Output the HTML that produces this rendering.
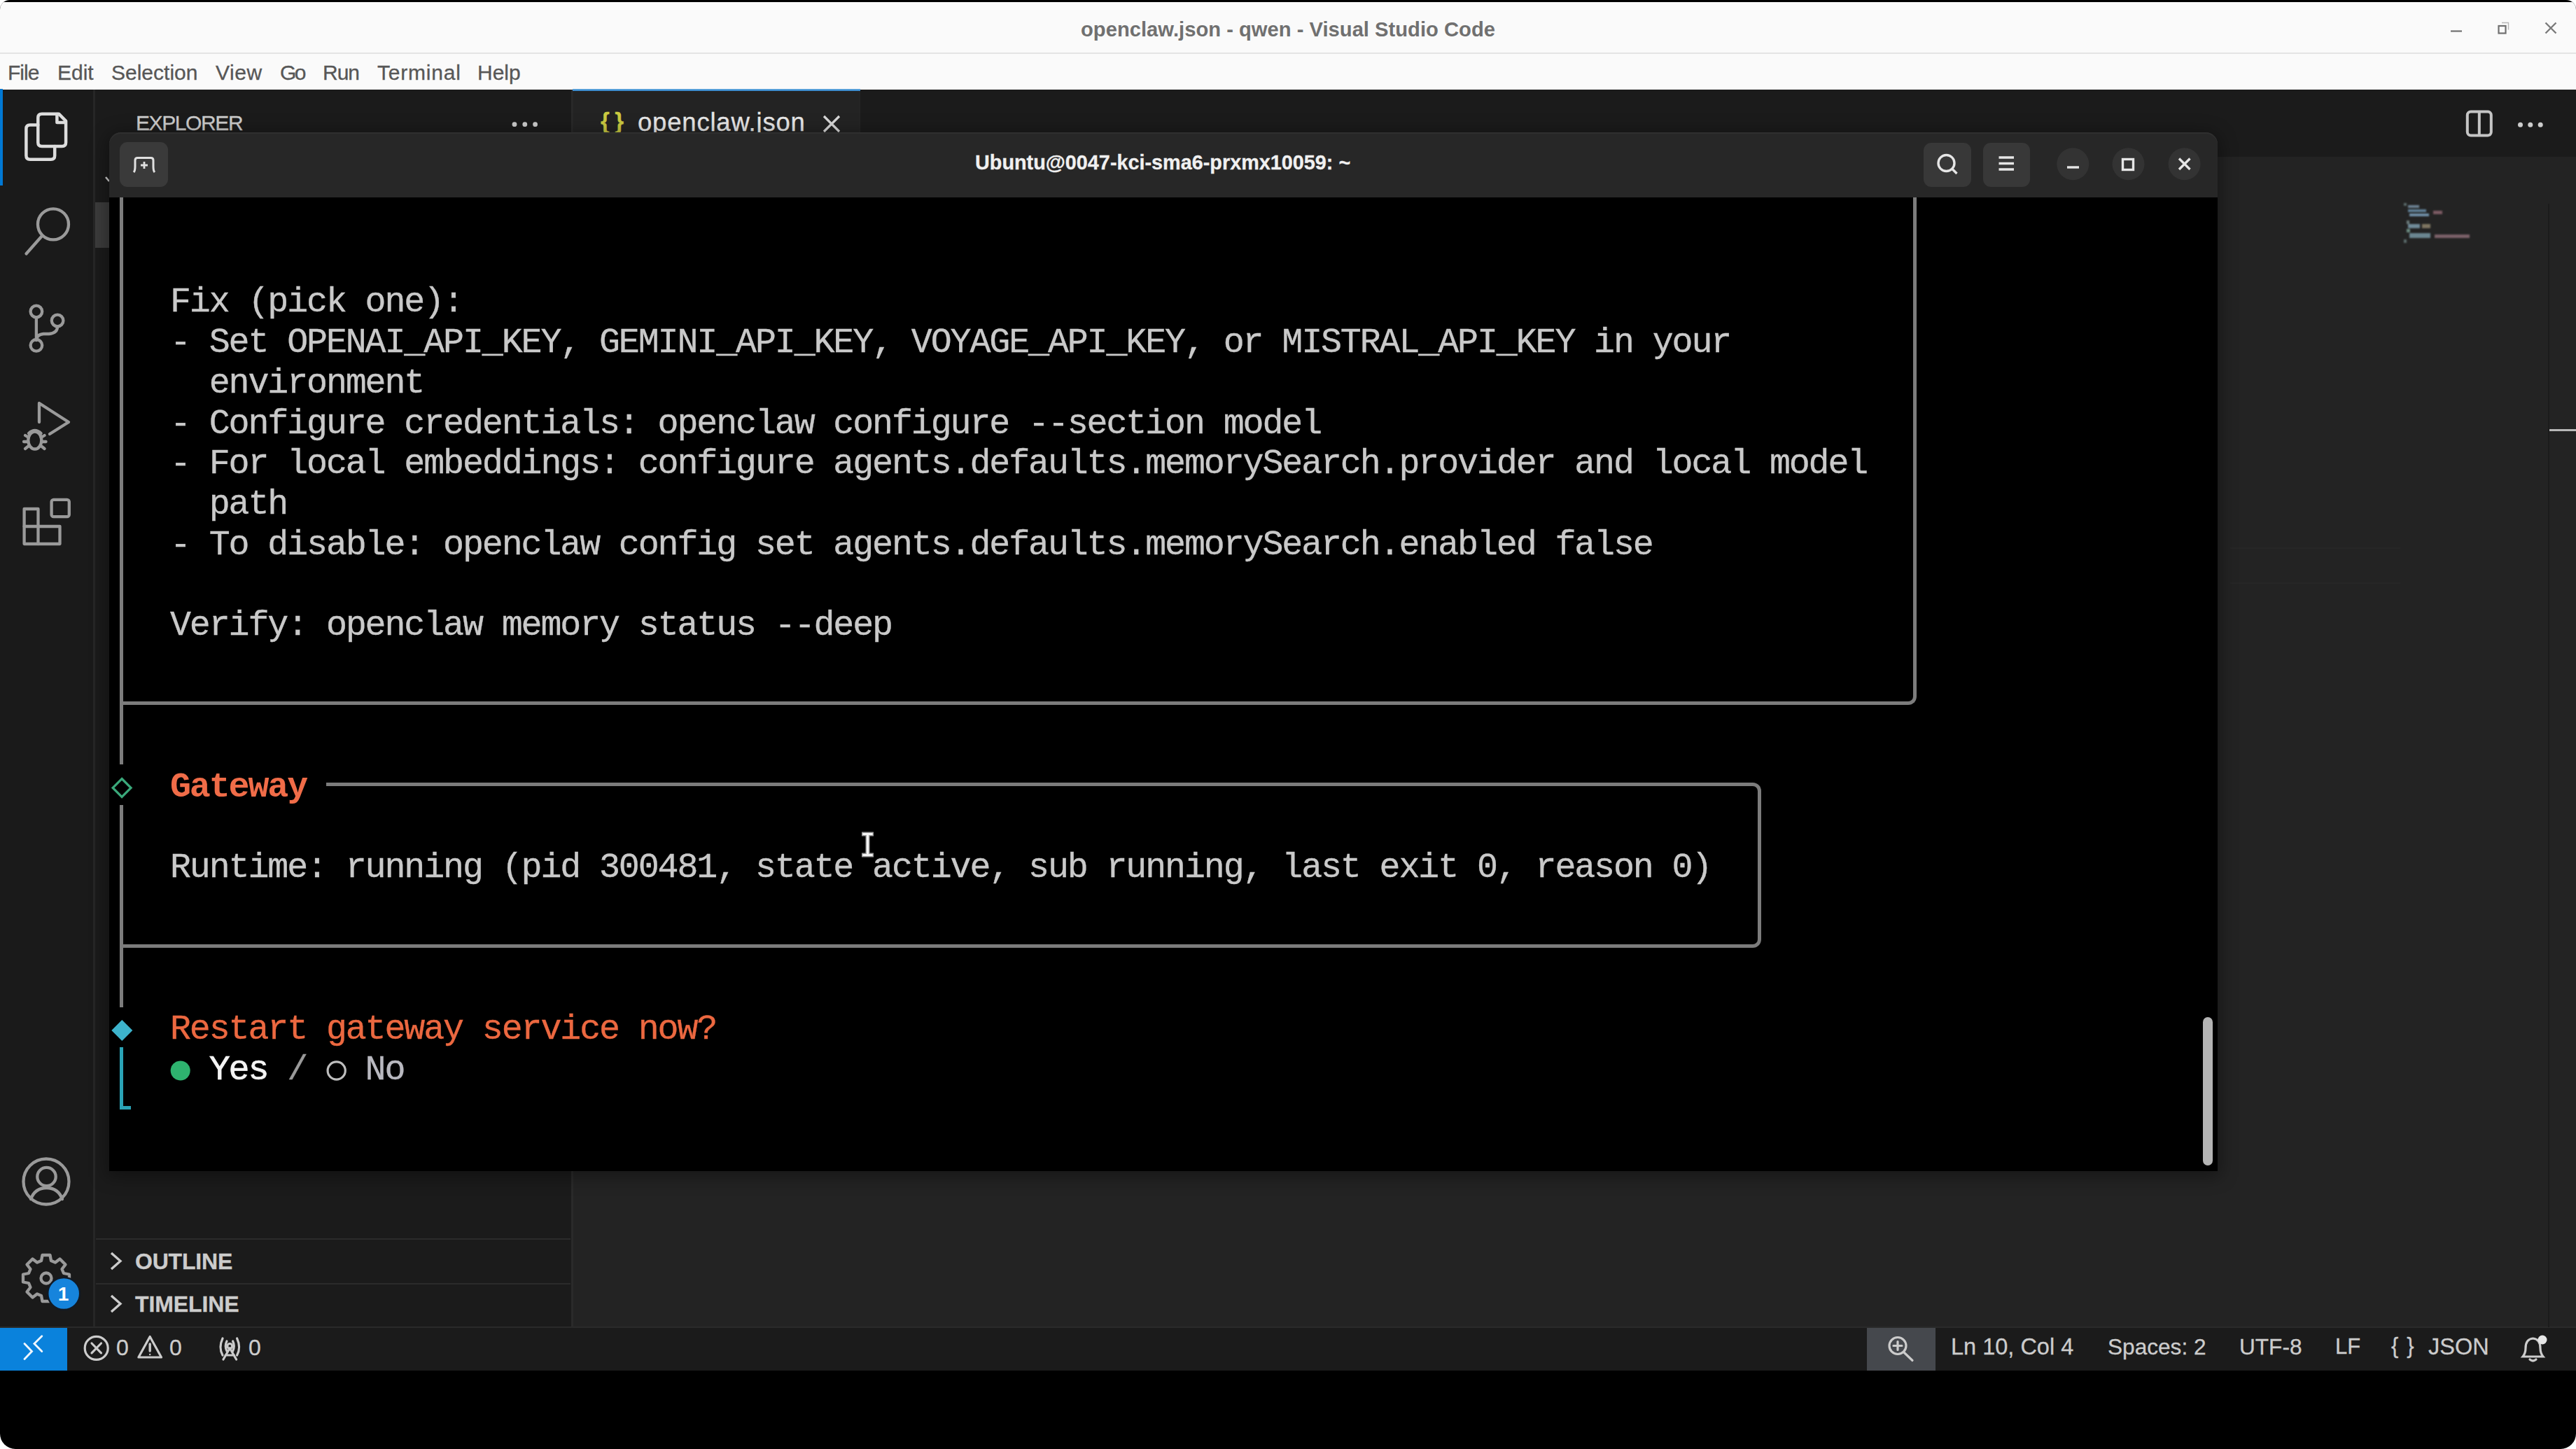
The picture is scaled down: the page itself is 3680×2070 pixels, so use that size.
<!DOCTYPE html>
<html><head><meta charset="utf-8">
<style>
*{margin:0;padding:0;box-sizing:border-box}
html,body{width:3680px;height:2070px;overflow:hidden;background:#ffffff}
body{position:relative;font-family:"Liberation Sans",sans-serif}
.a{position:absolute}
#frame{left:0;top:0;width:3680px;height:2070px;background:#000;border-radius:14px 14px 22px 22px;overflow:hidden}
#titlebar{left:0;top:3px;width:3680px;height:73px;background:#fafafa}
#tline{left:0;top:75px;width:3680px;height:2px;background:#e4e4e4}
#menubar{left:0;top:77px;width:3680px;height:51px;background:#fafafa}
.menu{top:87px;font-size:30px;color:#575757;line-height:34px;white-space:nowrap;-webkit-text-stroke:0.3px #575757}
#actbar{left:0;top:128px;width:134px;height:1768px;background:#1a1a1a}
#actsep{left:133px;top:128px;width:3px;height:1768px;background:#262626}
#sidebar{left:136px;top:128px;width:680px;height:1768px;background:#1b1b1b}
#sidesep{left:816px;top:128px;width:3px;height:1768px;background:#2a2a2a}
#tabbar{left:819px;top:128px;width:2861px;height:96px;background:#1b1b1b}
#editor{left:819px;top:224px;width:2861px;height:1672px;background:#232323}
#status{left:0;top:1897px;width:3680px;height:61px;background:#1b1b1b}
#statusline{left:0;top:1895px;width:3680px;height:3px;background:#2a2a2a}
.ui{color:#cccccc;white-space:nowrap;-webkit-text-stroke:0.3px currentColor}
svg{position:absolute;overflow:visible}
.t{position:absolute;font-family:"Liberation Mono",monospace;font-size:50px;letter-spacing:-2.14px;line-height:57.7px;color:#c9c9c9;white-space:pre;-webkit-text-stroke:0.35px currentColor}

</style></head>
<body>
<div id="frame" class="a">
  <div id="titlebar" class="a"></div>
  <div id="tline" class="a"></div>
  <div id="menubar" class="a"></div>
  <div class="a" style="left:0;top:25px;width:3680px;text-align:center;font-weight:bold;font-size:29.2px;color:#707070;line-height:34px;">openclaw.json - qwen - Visual Studio Code</div>
  <div class="a menu" style="left:11px;letter-spacing:-1px">File</div>
  <div class="a menu" style="left:82px;letter-spacing:0px">Edit</div>
  <div class="a menu" style="left:159px;letter-spacing:0px">Selection</div>
  <div class="a menu" style="left:308px;letter-spacing:0.6px">View</div>
  <div class="a menu" style="left:400px;letter-spacing:-2.5px">Go</div>
  <div class="a menu" style="left:461px;letter-spacing:-1px">Run</div>
  <div class="a menu" style="left:539px;letter-spacing:0.8px">Terminal</div>
  <div class="a menu" style="left:682px;letter-spacing:0px">Help</div>

  <div id="actbar" class="a"></div>
  <div id="actsep" class="a"></div>
  <div id="sidebar" class="a"></div>
  <div id="sidesep" class="a"></div>
  <div id="tabbar" class="a"></div>
  <div id="editor" class="a"></div>
  <div id="statusline" class="a"></div>
  <div id="status" class="a"></div>

  <!-- activity bar -->
  <div class="a" style="left:0;top:127px;width:4px;height:138px;background:#0078d4"></div>
  <svg style="left:0;top:0" width="134" height="1900" fill="none" stroke-linecap="round" stroke-linejoin="round">
    <g stroke="#dcdcdc" stroke-width="4.5">
      <path d="M59.8 162.7 H84 L94.1 172.8 V203.6 Q94.1 209.1 88.6 209.1 H59.8 Q54.3 209.1 54.3 203.6 V168.2 Q54.3 162.7 59.8 162.7 Z"/>
      <path d="M81.4 163 V175 H93.5"/>
      <path d="M54.3 178.6 H42.9 Q37.4 178.6 37.4 184.1 V222.3 Q37.4 227.8 42.9 227.8 H72.7 Q78.2 227.8 78.2 222.3 V209.1"/>
    </g>
    <g stroke="#9a9a9a" stroke-width="4.3">
      <circle cx="76" cy="320.4" r="22"/>
      <path d="M60 337 L37.5 362.5"/>
      <circle cx="51.9" cy="445" r="8.3"/>
      <circle cx="82.1" cy="458" r="8.3"/>
      <circle cx="51.9" cy="493.3" r="8.3"/>
      <path d="M51.9 453.3 V485"/>
      <path d="M82.1 466.3 Q82.1 476 70 477 H62 Q52 478 51.9 486"/>
      <path d="M56 603 V576 L98 603 L71 620"/>
      <ellipse cx="49.8" cy="629" rx="9.5" ry="12.5"/>
      <path d="M41 619 Q49.8 611 58.6 619"/>
      <path d="M36 622 L41 625 M63.6 622 L58.6 625 M34 631 H40 M65.6 631 H59.6 M36 641 L41 637 M63.6 641 L58.6 637"/>
      <path d="M34.6 727 H54.5 V777 H34.6 Z"/>
      <path d="M34.6 752 H85.5 V777 H54.5"/>
      <rect x="73.6" y="713.8" width="25.2" height="24.4" rx="3"/>
      <circle cx="66" cy="1688" r="32.5"/>
      <circle cx="66.5" cy="1681" r="13.2"/>
      <path d="M44 1713 Q50 1697 66.5 1697 Q83 1697 89 1713"/>
    </g>
  </svg>

  <!-- window controls -->
  <svg style="left:0;top:0" width="3680" height="80" fill="none" stroke="#707070" stroke-width="2.2">
    <path d="M3501 44.5 H3517"/>
    <rect x="3569.5" y="37" width="10" height="10.5"/>
    <path d="M3574 32.5 H3583.5 V42.5" stroke="#b8b8b8" stroke-width="1.4"/>
    <path d="M3636.5 32.5 L3651.5 47.5 M3651.5 32.5 L3636.5 47.5" stroke-width="2.4" stroke="#7a7a7a"/>
  </svg>
  <!-- sidebar header -->
  <div class="a ui" style="left:194px;top:159px;font-size:30px;line-height:34px;color:#cccccc;letter-spacing:-1.4px">EXPLORER</div>
  <svg style="left:0;top:0" width="800" height="300"><path d="M151 253 L156 259" stroke="#d0d0d0" stroke-width="2.5"/><g fill="#cccccc"><circle cx="735" cy="177.7" r="3.4"/><circle cx="749.8" cy="177.7" r="3.4"/><circle cx="764.6" cy="177.7" r="3.4"/></g></svg>
  <!-- sidebar scrollbar slider -->
  <div class="a" style="left:136px;top:289px;width:20px;height:65px;background:#3c3c3c"></div>
  <!-- tab -->
  <div class="a" style="left:817.5px;top:128px;width:411.5px;height:96px;background:#232323;border-left:1px solid #262626;border-right:1px solid #262626"></div>
  <div class="a" style="left:817.5px;top:127px;width:411.5px;height:3px;background:linear-gradient(#6aaee0,#2a7fc8)"></div>
  <div class="a ui" style="left:858px;top:155px;font-size:33px;line-height:36px;color:#cbcb41;font-weight:bold;letter-spacing:7.5px">{}</div>
  <div class="a ui" style="left:911px;top:155px;font-size:36.5px;line-height:40px;color:#e8e8e8;letter-spacing:0.8px">openclaw.json</div>
  <svg style="left:0;top:0" width="1300" height="300"><path d="M1177 166 L1199 188 M1199 166 L1177 188" stroke="#d8d8d8" stroke-width="3.2" fill="none"/></svg>
  <!-- editor actions -->
  <svg style="left:0;top:0" width="3680" height="300" fill="none">
    <rect x="3524.8" y="159.5" width="34" height="34" rx="5" stroke="#c5c5c5" stroke-width="4"/>
    <path d="M3541.8 160 V193" stroke="#c5c5c5" stroke-width="4"/>
    <g fill="#cccccc"><circle cx="3600.5" cy="178.2" r="3.5"/><circle cx="3614.8" cy="178.2" r="3.5"/><circle cx="3629.2" cy="178.2" r="3.5"/></g>
  </svg>
  <!-- minimap -->
  <svg style="left:0;top:0" width="3680" height="400">
    <g style="filter:blur(1.2px)">
      <rect x="3434" y="290" width="4" height="4" fill="#5a6a6a"/>
      <rect x="3440" y="293" width="16" height="4" fill="#6a8090"/>
      <rect x="3440" y="299" width="26" height="4" fill="#5f7f95"/>
      <rect x="3442" y="305" width="28" height="4" fill="#7090a8"/>
      <rect x="3476" y="301" width="13" height="5" fill="#7a5a62"/>
      <rect x="3438" y="315" width="4" height="5" fill="#6a7a7a"/>
      <rect x="3440" y="320" width="17" height="6" fill="#6f8a98"/>
      <rect x="3460" y="320" width="12" height="6" fill="#7c7460"/>
      <rect x="3438" y="327" width="5" height="5" fill="#6a8a80"/>
      <rect x="3442" y="333" width="30" height="7" fill="#6a8590"/>
      <rect x="3478" y="335" width="50" height="5" fill="#7a6068"/>
      <rect x="3434" y="342" width="4" height="5" fill="#5a6a6a"/>
    </g>
  </svg>
  <!-- editor right scrollbar area -->
  <div class="a" style="left:3640px;top:291px;width:2px;height:1605px;background:#1b1b1b"></div>
  <div class="a" style="left:3642px;top:613px;width:38px;height:3px;background:#b8b8b8"></div>
  <div class="a" style="left:3186px;top:782px;width:243px;height:2px;background:#262626"></div>
  <div class="a" style="left:3186px;top:832px;width:243px;height:2px;background:#262626"></div>
  <!-- sidebar sections -->
  <div class="a" style="left:137px;top:1769px;width:678px;height:2px;background:#2b2b2b"></div>
  <div class="a" style="left:137px;top:1833px;width:678px;height:2px;background:#2b2b2b"></div>
  <svg style="left:0;top:0" width="800" height="1900" fill="none" stroke="#cccccc" stroke-width="3.4">
    <path d="M159 1790 L172 1801.5 L159 1813"/>
    <path d="M159 1851 L172 1862.5 L159 1874"/>
  </svg>
  <div class="a ui" style="left:193px;top:1784.5px;font-size:32px;line-height:34px;font-weight:bold;letter-spacing:-0.2px">OUTLINE</div>
  <div class="a ui" style="left:193px;top:1846px;font-size:32px;line-height:34px;font-weight:bold;letter-spacing:-0.1px">TIMELINE</div>
  <!-- gear + badge -->
  <svg style="left:0;top:0" width="134" height="1900">
    <g transform="translate(66 1826)" fill="none" stroke="#9a9a9a" stroke-width="4.3" stroke-linejoin="round">
      <path d="M-5.5 -33 H5.5 L7 -25 L13 -22.5 L19.5 -27.5 L27.5 -19.5 L22.5 -13 L25 -7 L33 -5.5 V5.5 L25 7 L22.5 13 L27.5 19.5 L19.5 27.5 L13 22.5 L7 25 L5.5 33 H-5.5 L-7 25 L-13 22.5 L-19.5 27.5 L-27.5 19.5 L-22.5 13 L-25 7 L-33 5.5 V-5.5 L-25 -7 L-22.5 -13 L-27.5 -19.5 L-19.5 -27.5 L-13 -22.5 L-7 -25 Z"/>
      <circle cx="0" cy="0" r="7.5"/>
    </g>
    <circle cx="91.2" cy="1848" r="23" fill="#1684dc" stroke="#121a24" stroke-width="2.5"/>
    <text x="90.5" y="1858" text-anchor="middle" font-family="Liberation Sans" font-weight="bold" font-size="28" fill="#ffffff">1</text>
  </svg>
  <!-- status bar -->
  <div class="a" style="left:0;top:1897px;width:96px;height:61px;background:#0a82dc"></div>
  <svg style="left:0;top:0" width="600" height="2000" fill="none" stroke-linecap="round">
    <path d="M35 1919.6 L45.5 1930.5 L35 1941.5 M59.8 1908.7 L49 1919.6 L59.8 1930.5" stroke="#eef6fd" stroke-width="2.9"/>
    <g stroke="#cccccc" stroke-width="3.2">
      <circle cx="137.7" cy="1925.9" r="16.5"/>
      <path d="M131 1919 L144.5 1932.8 M144.5 1919 L131 1932.8"/>
      <path d="M214.2 1909.5 L230.5 1939 H197.9 Z" stroke-linejoin="round"/>
      <path d="M214.2 1920 V1930" stroke-width="3.4"/>
      <circle cx="214.2" cy="1935" r="1.2" fill="#cccccc" stroke="none"/>
      <path d="M318 1912 Q312 1925 318 1936 M338.6 1912 Q344.6 1925 338.6 1936 M324 1916 Q320.5 1923 324 1930 M332.6 1916 Q336 1923 332.6 1930"/>
      <circle cx="328.3" cy="1923" r="3.5"/>
      <path d="M328.3 1926 L319 1942 M328.3 1926 L337.6 1942 M322 1936 H334.6"/>
    </g>
  </svg>
  <div class="a ui" style="left:166px;top:1907px;font-size:32px;line-height:36px">0</div>
  <div class="a ui" style="left:242px;top:1907px;font-size:32px;line-height:36px">0</div>
  <div class="a ui" style="left:355px;top:1907px;font-size:32px;line-height:36px">0</div>
  <div class="a" style="left:2667px;top:1897px;width:98px;height:61px;background:#45484d"></div>
  <svg style="left:0;top:0" width="3680" height="2000" fill="none" stroke="#cccccc" stroke-width="3.2" stroke-linecap="round">
    <circle cx="2711" cy="1922.5" r="12"/>
    <path d="M2720 1932 L2732 1943.5"/>
    <path d="M2711 1916.5 V1928.5 M2705 1922.5 H2717"/>
    <path d="M3620 1938 H3604 Q3608 1933 3608 1926 Q3608 1913 3618.5 1912 Q3629 1913 3629 1926 Q3629 1933 3633 1938 H3620 M3614 1942 Q3618.5 1946 3623 1942"/>
  </svg>
  <svg style="left:0;top:0" width="3680" height="2000"><circle cx="3632" cy="1914" r="6.5" fill="#e6e6e6"/></svg>
  <div class="a ui" style="left:2787px;top:1906px;font-size:32.5px;line-height:36px">Ln 10, Col 4</div>
  <div class="a ui" style="left:3011px;top:1906px;font-size:31.6px;line-height:36px">Spaces: 2</div>
  <div class="a ui" style="left:3199px;top:1906px;font-size:31.6px;line-height:36px">UTF-8</div>
  <div class="a ui" style="left:3336px;top:1906px;font-size:31px;line-height:36px">LF</div>
  <div class="a ui" style="left:3416px;top:1905px;font-size:31px;line-height:36px;letter-spacing:12px">{}</div>
  <div class="a ui" style="left:3469px;top:1906px;font-size:32.5px;line-height:36px">JSON</div>

  <!-- terminal window -->
  <div class="a" style="left:155.5px;top:189px;width:3012.5px;height:1484px;border-radius:17px 17px 0 0;box-shadow:0 4px 24px 4px rgba(0,0,0,0.35)"></div>
  <div class="a" id="twin" style="left:155.5px;top:189px;width:3012.5px;height:1484px;background:#272727;border-radius:17px 17px 0 0;overflow:hidden;box-shadow:inset 0 2px 0 #2f2f2f">
  </div>

  <div class="a" style="left:170.7px;top:203px;width:69.3px;height:63.6px;background:#3a3a3a;border-radius:11px"></div>
  <svg style="left:0;top:0" width="3680" height="300" fill="none" stroke="#e0e0e0" stroke-width="3">
    <path d="M191 246 Q193 244 193 238 V229 Q193 225.5 196.5 225.5 H215.5 Q219 225.5 219 229 V238 Q219 244 221 246"/>
    <path d="M206 231 V241 M201 236 H211" stroke-width="2.8"/>
  </svg>
  <div class="a ui" style="left:0;top:215px;width:3680px;padding-left:1232px;text-align:left;"><span style="position:absolute;left:1393px;font-size:28.8px;line-height:34px;font-weight:bold;color:#f0f0f0">Ubuntu@0047-kci-sma6-prxmx10059: ~</span></div>
  <div class="a" style="left:2748px;top:203.5px;width:68px;height:63.5px;background:#383838;border-radius:11px"></div>
  <div class="a" style="left:2832.7px;top:203.5px;width:67px;height:63.5px;background:#383838;border-radius:11px"></div>
  <svg style="left:0;top:0" width="3680" height="300">
    <circle cx="2961.3" cy="234.3" r="23" fill="#333333"/>
    <circle cx="3040.5" cy="234.3" r="23" fill="#333333"/>
    <circle cx="3120.6" cy="234.3" r="23" fill="#333333"/>
    <g fill="none" stroke="#e6e6e6" stroke-width="3.4">
      <circle cx="2780.5" cy="233" r="11.5"/>
      <path d="M2789 241.5 L2795.5 248"/>
      <path d="M2855.5 225 H2877 M2855.5 233.5 H2877 M2855.5 242 H2877"/>
      <path d="M2953 239 H2970"/>
      <rect x="3032.5" y="227.5" width="15" height="15"/>
      <path d="M3113 226.5 L3128.5 242 M3128.5 226.5 L3113 242"/>
    </g>
  </svg>
  <div class="a" id="tcontent" style="left:155.5px;top:282px;width:3012.5px;height:1391px;background:#000;overflow:hidden">
<div class="a" style="left:15.30px;top:0.00px;width:5.00px;height:810.00px;background:#7c7c7c"></div>
<div class="a" style="left:15.30px;top:868.00px;width:5.00px;height:289.00px;background:#7c7c7c"></div>
<div class="a" style="left:15.30px;top:-132.00px;width:2567.70px;height:857.20px;border-right:5px solid #7c7c7c;border-bottom:5px solid #7c7c7c;border-bottom-right-radius:12px"></div>
<div class="a" style="left:310.00px;top:835.90px;width:2050.00px;height:235.80px;border-top:5px solid #7c7c7c;border-right:5px solid #7c7c7c;border-bottom:5px solid #7c7c7c;border-top-right-radius:12px;border-bottom-right-radius:12px"></div>
<div class="a" style="left:15.30px;top:1066.70px;width:296.70px;height:5.00px;background:#7c7c7c"></div>
<div class="a" style="left:15.50px;top:1214.00px;width:5.00px;height:88.00px;background:#2aa3b6"></div>
<div class="a" style="left:15.50px;top:1297.50px;width:16.30px;height:5.00px;background:#2aa3b6"></div>
<svg style="left:0;top:0" width="600" height="1400">
 <path d="M18.099999999999994 830.5 L31.099999999999994 843.5 L18.099999999999994 856.5 L5.099999999999994 843.5 Z" fill="none" stroke="#3aa87a" stroke-width="3.2"/>
 <path d="M18.30000000000001 1175 L33.30000000000001 1190 L18.30000000000001 1205 L3.3000000000000114 1190 Z" fill="#3db3cc"/>
 <circle cx="101.69999999999999" cy="1247.5" r="14" fill="#2eb36f"/>
 <circle cx="324.7" cy="1247.5" r="12.6" fill="none" stroke="#bdbdbd" stroke-width="3.2"/>
 <path d="M1078.0 909.5 H1089.0 M1078.0 939.5 H1089.0 M1083.5 909.5 V939.5" stroke="#9a9a9a" stroke-width="6" stroke-linecap="square"/>
 <path d="M1078.0 909.5 H1089.0 M1078.0 939.5 H1089.0 M1083.5 909.5 V939.5" stroke="#f4f4f4" stroke-width="3.2" stroke-linecap="square"/>
</svg>
<div class="t" style="left:87.48px;top:121.40px;">Fix (pick one):</div>
<div class="t" style="left:87.48px;top:179.10px;">- Set OPENAI_API_KEY, GEMINI_API_KEY, VOYAGE_API_KEY, or MISTRAL_API_KEY in your</div>
<div class="t" style="left:87.48px;top:236.80px;">  environment</div>
<div class="t" style="left:87.48px;top:294.50px;">- Configure credentials: openclaw configure --section model</div>
<div class="t" style="left:87.48px;top:352.20px;">- For local embeddings: configure agents.defaults.memorySearch.provider and local model</div>
<div class="t" style="left:87.48px;top:409.90px;">  path</div>
<div class="t" style="left:87.48px;top:467.60px;">- To disable: openclaw config set agents.defaults.memorySearch.enabled false</div>
<div class="t" style="left:87.48px;top:583.00px;">Verify: openclaw memory status --deep</div>
<div class="t" style="left:87.48px;top:813.80px;color:#f06c48;font-weight:bold;-webkit-text-stroke:0">Gateway</div>
<div class="t" style="left:87.48px;top:929.20px;">Runtime: running (pid 300481, state active, sub running, last exit 0, reason 0)</div>
<div class="t" style="left:87.48px;top:1160.00px;color:#ec6840">Restart gateway service now?</div>
<div class="t" style="left:143.20px;top:1217.70px;color:#f4f4f4;-webkit-text-stroke:0.7px #f4f4f4">Yes</div>
<div class="t" style="left:254.64px;top:1217.70px;color:#9a9a9a">/</div>
<div class="t" style="left:366.08px;top:1217.70px;color:#b9b9c0">No</div>

  <div class="a" style="left:2991.8px;top:1171px;width:13.5px;height:212px;background:#b4b4b4;border-radius:7px"></div>
  </div>
</div>
</body></html>
